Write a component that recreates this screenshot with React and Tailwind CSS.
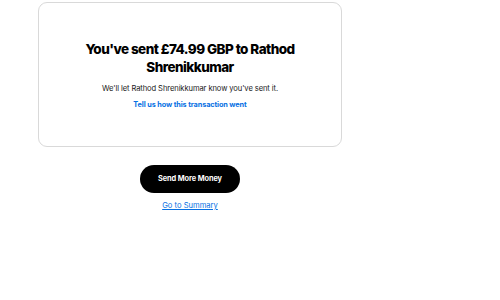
export default function App() {
  return (
    <div className="w-[500px] h-[300px] bg-white" style={{ fontFamily: 'Inter, "Liberation Sans", sans-serif' }}>
      <div className="w-[304px] ml-[38px] pt-[2px] flex flex-col items-center">
        <div className="w-full h-[145px] border border-[#d9d9d9] rounded-[9px] flex flex-col items-center pt-[37px]">
          <h1 className="text-[13.5px] leading-[18px] font-extrabold text-black text-center tracking-[-0.55px] w-[225px]">
            You've sent £74.99 GBP to Rathod Shrenikkumar
          </h1>
          <p className="mt-[7px] text-[7.6px] leading-[11px] text-[#1a1a1a] tracking-[-0.1px]">
            We'll let Rathod Shrenikkumar know you've sent it.
          </p>
          <a className="mt-[5px] text-[7.3px] leading-[11px] font-bold text-[#0770e3] tracking-[-0.1px]">
            Tell us how this transaction went
          </a>
        </div>
        <button className="mt-[18px] w-[100px] h-[28px] rounded-full bg-black text-white text-[7.4px] font-bold tracking-[-0.1px]">
          Send More Money
        </button>
        <a className="mt-[7px] text-[7.6px] leading-[12px] text-[#0770e3] underline">
          Go to Summary
        </a>
      </div>
    </div>
  );
}
